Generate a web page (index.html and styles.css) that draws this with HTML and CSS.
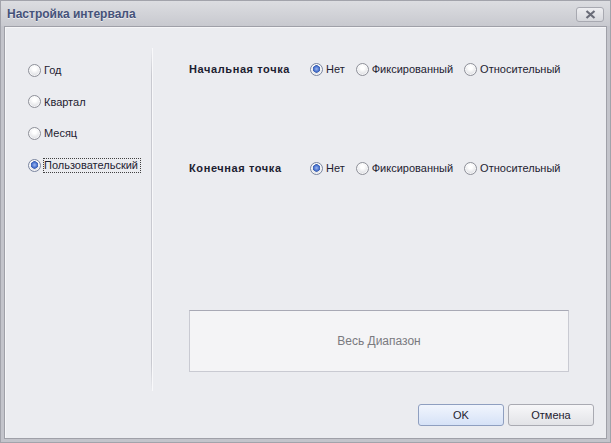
FILE: index.html
```html
<!DOCTYPE html>
<html lang="ru">
<head>
    <meta charset="UTF-8">
    <title>Настройка интервала</title>
    <link rel="stylesheet" href="styles.css">
</head>
<body>
    <div class="dialog">
        <div class="titlebar">
            <span class="title">Настройка интервала</span>
            <button class="close-btn" aria-label="Закрыть">
                <svg width="11" height="9" viewBox="0 0 11 9">
                    <path d="M1.5 1 L9.5 8 M9.5 1 L1.5 8" stroke="#6a6c78" stroke-width="2.2" fill="none"/>
                </svg>
            </button>
        </div>

        <div class="client">
            <div class="content">
                <div class="period-pane">
                    <label class="radio"><span class="dot"></span>Год</label>
                    <label class="radio"><span class="dot"></span>Квартал</label>
                    <label class="radio"><span class="dot"></span>Месяц</label>
                    <label class="radio"><span class="dot checked"></span><span class="focus">Пользовательский</span></label>
                </div>

                <div class="separator"></div>

                <div class="range-pane">
                    <div class="point-row">
                        <span class="point-label">Начальная точка</span>
                        <label class="radio"><span class="dot checked"></span>Нет</label>
                        <label class="radio"><span class="dot"></span>Фиксированный</label>
                        <label class="radio"><span class="dot"></span>Относительный</label>
                    </div>
                    <div class="point-row end-row">
                        <span class="point-label">Конечная точка</span>
                        <label class="radio"><span class="dot checked"></span>Нет</label>
                        <label class="radio"><span class="dot"></span>Фиксированный</label>
                        <label class="radio"><span class="dot"></span>Относительный</label>
                    </div>
                    <div class="preview">Весь Диапазон</div>
                </div>
            </div>

            <div class="footer">
                <button class="btn btn-ok">OK</button>
                <button class="btn">Отмена</button>
            </div>
        </div>
    </div>
</body>
</html>
```

FILE: styles.css
```css
html, body {
    margin: 0;
    padding: 0;
    width: 611px;
    height: 443px;
    overflow: hidden;
}
body {
    font-family: "Liberation Sans", Arial, sans-serif;
    font-size: 11px;
    color: #1e2230;
}
.dialog {
    box-sizing: border-box;
    width: 611px;
    height: 443px;
    display: flex;
    flex-direction: column;
    background: #c3c4cb;
    border: 1px solid #a2a3ab;
}
.titlebar {
    height: 25px;
    flex-shrink: 0;
    display: flex;
    align-items: center;
    justify-content: space-between;
    padding: 0 6px 0 6px;
    background: linear-gradient(#dcdde1, #c8c9cf);
}
.title {
    font-weight: bold;
    font-size: 12px;
    color: #45527a;
    text-shadow: 0 1px 0 rgba(255, 255, 255, 0.6);
    margin-top: 1px;
}
.close-btn {
    width: 28px;
    height: 15px;
    margin-top: 2px;
    padding: 0;
    display: flex;
    align-items: center;
    justify-content: center;
    border: 1px solid #a8a9b1;
    border-radius: 3px;
    background: linear-gradient(#eeeef1, #d6d7dc);
}

/* main area */
.client {
    flex: 1;
    display: flex;
    flex-direction: column;
    margin: 0 3px 3px 3px;
    background: #ebecf0;
    border: 1px solid #9fa0a8;
    box-shadow: inset 1px 1px 0 #f6f6f8;
}
.content {
    flex: 1;
    display: flex;
}
.period-pane {
    width: 123px;
    padding: 35px 0 0 23px;
    display: flex;
    flex-direction: column;
    gap: 15.7px;
}
.separator {
    width: 1px;
    margin-top: 21px;
    border-right: 1px solid #f8f8fa;
    background: linear-gradient(rgba(200, 201, 208, 0), #c8c9d0 8%, #c8c9d0 92%, rgba(200, 201, 208, 0));
}
.range-pane {
    flex: 1;
    padding: 34px 0 0 36px;
    display: flex;
    flex-direction: column;
}
.point-row {
    display: flex;
    align-items: center;
    height: 16px;
}
.end-row {
    margin-top: 83px;
}
.point-label {
    width: 121px;
    font-weight: bold;
    letter-spacing: 0.6px;
    color: #1c2030;
}

/* radio buttons */
.radio {
    display: flex;
    align-items: center;
    height: 16px;
    white-space: nowrap;
    margin-right: 11px;
}
.dot {
    box-sizing: border-box;
    width: 13px;
    height: 13px;
    border-radius: 50%;
    margin-right: 3px;
    border: 1px solid #8e9099;
    background: radial-gradient(circle at 50% 35%, #ffffff 20%, #e6e7ea 60%, #c9cad0 100%);
    box-shadow: inset 0 0 0 1px rgba(255, 255, 255, 0.7);
    flex-shrink: 0;
}
.dot.checked {
    border-color: #7b86a0;
    background:
        radial-gradient(circle at 50% 45%, #9fb8ee 0, #4a74d0 2.5px, #3c5fae 3.5px, transparent 4px),
        radial-gradient(circle at 50% 35%, #ffffff 20%, #e6e7ea 60%, #c9cad0 100%);
}
.focus {
    outline: 1px dotted #404040;
    outline-offset: 0;
    padding: 0 2px 1px 0;
}

.preview {
    box-sizing: border-box;
    margin-top: 134px;
    width: 380px;
    height: 62px;
    display: flex;
    align-items: center;
    justify-content: center;
    background: #f4f4f6;
    border: 1px solid #c9cad2;
    border-top-color: #a8a9b5;
    font-size: 12px;
    color: #7a7a80;
}

/* dialog buttons */
.footer {
    display: flex;
    justify-content: flex-end;
    gap: 4px;
    padding: 13px 12px 12px 0;
}
.btn {
    width: 86px;
    height: 22px;
    padding: 0;
    font-family: "Liberation Sans", Arial, sans-serif;
    font-size: 11px;
    color: #1e2230;
    border: 1px solid #a9aab2;
    border-radius: 3px;
    background: linear-gradient(#f7f7f9, #e2e3e7);
}
.btn-ok {
    border-color: #8f9fc0;
    background: linear-gradient(#f1f5fd, #d6e2f7);
}
```
